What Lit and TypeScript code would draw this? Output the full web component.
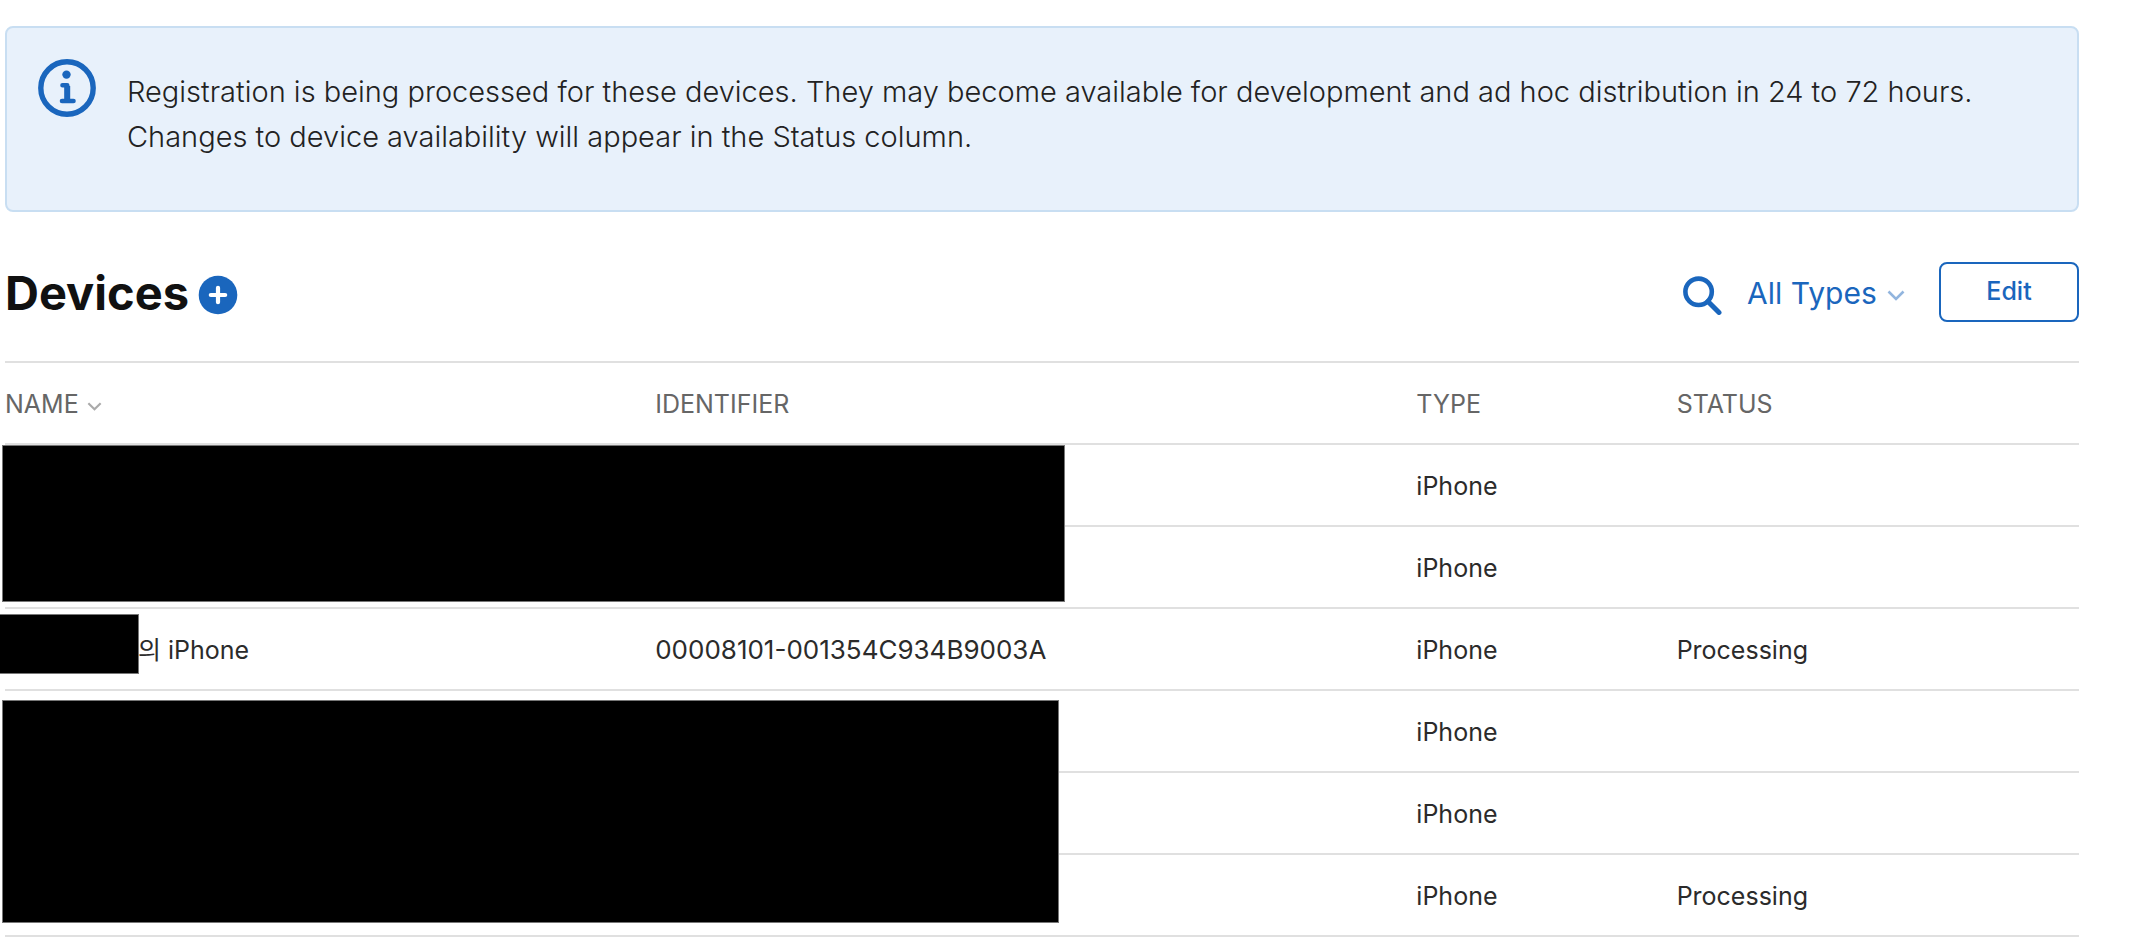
import { LitElement, html, css, svg } from "lit";
import { customElement, property } from "lit/decorators.js";

interface Device {
  owner?: string;
  identifier?: string;
  type: string;
  status?: string;
}

const devices: Device[] = [
  { type: "iPhone" },
  { type: "iPhone" },
  {
    owner: "의 iPhone",
    identifier: "00008101-001354C934B9003A",
    type: "iPhone",
    status: "Processing",
  },
  { type: "iPhone" },
  { type: "iPhone" },
  { type: "iPhone", status: "Processing" },
];

const chevron = svg`<path d="M1.5 1.5 L9 9 L16.5 1.5" fill="none" stroke="currentColor" stroke-width="2.6" />`;

@customElement("info-banner")
export class InfoBanner extends LitElement {
  static styles = css`
    :host {
      display: block;
    }
    .banner {
      display: flex;
      align-items: flex-start;
      gap: 31px;
      box-sizing: border-box;
      padding: 31px;
      border: 2px solid #c8def2;
      border-radius: 8px;
      background: #e8f1fb;
    }
    .icon {
      flex: none;
      width: 58px;
      height: 58px;
    }
    .text {
      margin: 0;
      padding: 10px 0 20px;
      font-size: 29px;
      font-weight: 300;
      line-height: 45px;
      color: #222;
    }
    .line {
      display: block;
    }
  `;

  render() {
    return html`
      <div class="banner" role="status">
        <svg class="icon" viewBox="0 0 58 58" aria-hidden="true">
          <circle cx="29" cy="29" r="26.2" fill="none" stroke="#1a66bd" stroke-width="5.4" />
          <circle cx="28.5" cy="15.6" r="4.2" fill="#1a66bd" />
          <path
            d="M24.5 26.2 H29.2 V42 M24 42 H35.5"
            fill="none"
            stroke="#1a66bd"
            stroke-width="4.6"
            stroke-linecap="round"
            stroke-linejoin="round"
          />
          <path d="M29.2 27 V41" stroke="#1a66bd" stroke-width="6" />
        </svg>
        <p class="text">
          <span class="line"
            >Registration is being processed for these devices. They may become available for
            development and ad hoc distribution in 24 to 72 hours.</span
          >
          <span class="line">Changes to device availability will appear in the Status column.</span>
        </p>
      </div>
    `;
  }
}

@customElement("device-toolbar")
export class DeviceToolbar extends LitElement {
  static styles = css`
    :host {
      display: block;
    }
    .bar {
      display: flex;
      align-items: center;
      justify-content: space-between;
      height: 60px;
    }
    .heading,
    .actions {
      display: flex;
      align-items: center;
    }
    .heading {
      gap: 9px;
    }
    h1 {
      margin: 0;
      padding-top: 2px;
      font-size: 47px;
      font-weight: 700;
      line-height: 60px;
      color: #111;
    }
    button,
    select {
      margin: 0;
      padding: 0;
      border: 0;
      background: none;
      font-family: inherit;
      color: #1a66bd;
      cursor: pointer;
    }
    .icon-button {
      display: flex;
      padding-top: 6px;
    }
    .add,
    .search {
      width: 40px;
      height: 40px;
    }
    .filter {
      display: flex;
      align-items: center;
      gap: 10px;
      margin: 0 34px 0 25px;
    }
    select {
      appearance: none;
      padding-top: 2px;
      font-size: 30px;
      line-height: 40px;
    }
    .chevron {
      width: 18px;
      height: 11px;
      padding-top: 6px;
      color: #92b5de;
    }
    .edit {
      box-sizing: border-box;
      width: 140px;
      height: 60px;
      border: 2px solid #1a66bd;
      border-radius: 8px;
      background: #fff;
      font-size: 25px;
      font-weight: 500;
      padding-bottom: 2px;
    }
  `;

  render() {
    return html`
      <div class="bar">
        <div class="heading">
          <h1>Devices</h1>
          <button class="icon-button" type="button" aria-label="Register a device">
            <svg class="add" viewBox="0 0 40 40" aria-hidden="true">
              <circle cx="20" cy="20" r="19.3" fill="#1a66bd" />
              <path
                d="M20 12.8 V27.2 M12.8 20 H27.2"
                fill="none"
                stroke="#fff"
                stroke-width="4.2"
                stroke-linecap="round"
              />
            </svg>
          </button>
        </div>
        <div class="actions">
          <button class="icon-button" type="button" aria-label="Search">
            <svg class="search" viewBox="0 0 40 40" aria-hidden="true">
              <circle cx="16.6" cy="16.8" r="13.2" fill="none" stroke="#1a66bd" stroke-width="4.6" />
              <path
                d="M26 26.4 L37 37.4"
                stroke="#1a66bd"
                stroke-width="5"
                stroke-linecap="round"
              />
            </svg>
          </button>
          <div class="filter">
            <select aria-label="Device type">
              <option>All Types</option>
            </select>
            <svg class="chevron" viewBox="0 0 18 11" aria-hidden="true">${chevron}</svg>
          </div>
          <button class="edit" type="button">Edit</button>
        </div>
      </div>
    `;
  }
}

@customElement("device-table")
export class DeviceTable extends LitElement {
  @property({ attribute: false }) devices: Device[] = [];

  static styles = css`
    :host {
      display: block;
      position: relative;
    }
    table {
      width: 100%;
      table-layout: fixed;
      border-collapse: separate;
      border-spacing: 0;
      border-top: 2px solid #e0e0e0;
    }
    .col-name {
      width: 31.35%;
    }
    .col-identifier {
      width: 36.7%;
    }
    .col-type {
      width: 12.55%;
    }
    th,
    td {
      box-sizing: border-box;
      height: 82px;
      padding: 2px 0 0;
      border-bottom: 2px solid #e0e0e0;
      text-align: left;
      font-size: 25px;
      line-height: 32px;
      font-weight: 400;
      color: #2b2b2b;
      white-space: nowrap;
    }
    th {
      color: #666;
    }
    .identifier {
      font-size: 26px;
    }
    .sort {
      display: flex;
      align-items: center;
      gap: 8px;
      padding: 0;
      border: 0;
      background: none;
      font: inherit;
      color: inherit;
    }
    .chevron {
      width: 15px;
      height: 9px;
      padding-top: 4px;
      color: #aaa;
    }
    .named {
      position: relative;
      padding-left: 133px;
    }
    .cover {
      position: absolute;
      box-sizing: border-box;
      border: 1px solid #777;
      background: #000;
    }
    .cover-top {
      top: 84px;
      left: -3px;
      width: 51.25%;
      height: 157px;
    }
    .cover-name {
      top: 5px;
      left: -6px;
      width: 140px;
      height: 60px;
    }
    .cover-bottom {
      top: 339px;
      left: -3px;
      width: 50.95%;
      height: 223px;
    }
  `;

  render() {
    return html`
      <table>
        <colgroup>
          <col class="col-name" />
          <col class="col-identifier" />
          <col class="col-type" />
          <col />
        </colgroup>
        <thead>
          <tr>
            <th scope="col" aria-sort="ascending">
              <button class="sort" type="button">
                NAME
                <svg class="chevron" viewBox="0 0 18 11" aria-hidden="true">${chevron}</svg>
              </button>
            </th>
            <th scope="col">IDENTIFIER</th>
            <th scope="col">TYPE</th>
            <th scope="col">STATUS</th>
          </tr>
        </thead>
        <tbody>
          ${this.devices.map(
            (device) => html`
              <tr>
                ${device.owner
                  ? html`<td class="named"><span class="cover cover-name"></span>${device.owner}</td>`
                  : html`<td></td>`}
                <td class="identifier">${device.identifier}</td>
                <td>${device.type}</td>
                <td>${device.status}</td>
              </tr>
            `
          )}
        </tbody>
      </table>
      <div class="cover cover-top"></div>
      <div class="cover cover-bottom"></div>
    `;
  }
}

@customElement("app-root")
export class AppRoot extends LitElement {
  static styles = css`
    :host {
      display: block;
      overflow: hidden;
      background: #fff;
      font-family: Inter, "Noto Sans CJK KR", sans-serif;
    }
    .page {
      display: flex;
      flex-direction: column;
      padding: 26px 73px 0 5px;
    }
    .toolbar {
      margin: 50px 0 39px;
    }
  `;

  render() {
    return html`
      <main class="page">
        <info-banner></info-banner>
        <device-toolbar class="toolbar"></device-toolbar>
        <device-table .devices=${devices}></device-table>
      </main>
    `;
  }
}
